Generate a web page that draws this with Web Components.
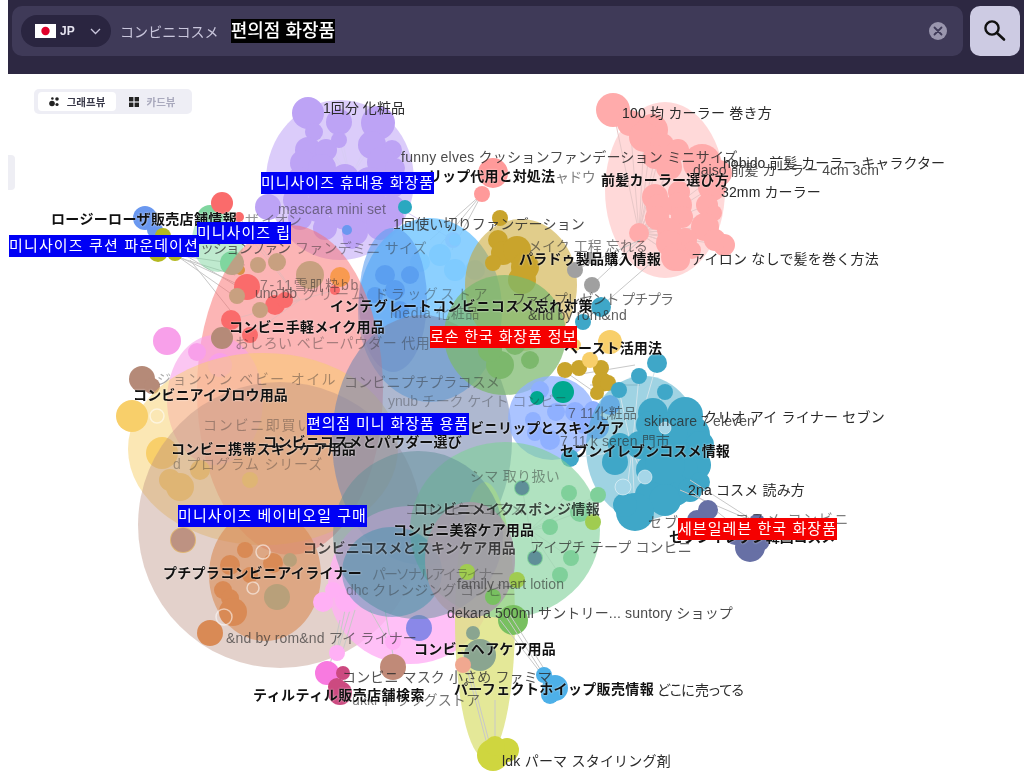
<!DOCTYPE html>
<html lang="ja">
<head>
<meta charset="utf-8">
<title>graph</title>
<style>
  html, body { margin: 0; height: 100%; background: #fff; overflow: hidden; }
  body { padding-left: 8px; box-sizing: border-box; display: flex; flex-direction: column;
    font-family: "Liberation Sans", "Noto Sans CJK JP", "Noto Sans CJK KR", sans-serif; filter: blur(.35px); }
</style>
</head>
<body>
<app-header></app-header>
<graph-canvas>
  <view-toggle></view-toggle>
  <graph-label x="323" y="107" w="82">1回分 化粧品</graph-label>
  <graph-label x="622" y="112" w="150">100 均 カーラー 巻き方</graph-label>
  <graph-label x="401" y="156" w="337" o=".85">funny elves クッションファンデーション ミニサイズ</graph-label>
  <graph-label x="723" y="162" w="222">hobido 前髪 カーラー キャラクター</graph-label>
  <graph-label x="693" y="169" w="186" o=".85">daiso 前髪 カーラー 4cm 3cm</graph-label>
  <graph-label x="721" y="191" w="100">32mm カーラー</graph-label>
  <graph-label x="555" y="176" w="40" o=".6">ャドウ</graph-label>
  <graph-label x="278" y="209" w="108" o=".55">mascara mini set</graph-label>
  <graph-label x="393" y="223" w="192" o=".85">1回使い切りファンデーション</graph-label>
  <graph-label x="528" y="245" w="120" o=".6">メイク 工程 忘れる</graph-label>
  <graph-label x="691" y="258" w="188">アイロン なしで髪を巻く方法</graph-label>
  <graph-label x="245" y="219" w="56" o=".5">ザ イオン</graph-label>
  <graph-label x="200" y="247" w="90" o=".7">ッションファン</graph-label>
  <graph-label x="295" y="247" w="132" o=".45">ファンデミニ サイズ</graph-label>
  <graph-label x="260" y="284" w="100" o=".5">7-11雪肌粋bb</graph-label>
  <graph-label x="255" y="293" w="42" o=".6">uno bb</graph-label>
  <graph-label x="302" y="293" w="188" o=".4">クリーム ドラッグストア</graph-label>
  <graph-label x="512" y="298" w="161" o=".7">ファイ プレゼント プチプラ</graph-label>
  <graph-label x="528" y="315" w="99" o=".75">&amp;nd by rom&amp;nd</graph-label>
  <graph-label x="390" y="312" w="90" o=".4">media 化粧品</graph-label>
  <graph-label x="235" y="342" w="195" o=".4">おしろい ベビーパウダー 代用</graph-label>
  <graph-label x="344" y="381" w="156" o=".45">コンビニプチプラコスメ</graph-label>
  <graph-label x="157" y="378" w="180" o=".4">ジョンソン ベビー オイル</graph-label>
  <graph-label x="388" y="400" w="180" o=".35">ynub チーク ケイト コンビニ</graph-label>
  <graph-label x="568" y="412" w="69" o=".6">7 11化粧品</graph-label>
  <graph-label x="644" y="421" w="111" o=".8">skincare 7 eleven</graph-label>
  <graph-label x="703" y="416" w="182">クリオ アイ ライナー セブン</graph-label>
  <graph-label x="203" y="424" w="110" o=".35">コンビニ即買い</graph-label>
  <graph-label x="560" y="440" w="110" o=".6">7 11 k seren 門市</graph-label>
  <graph-label x="173" y="463" w="150" o=".35">d プログラム シリーズ</graph-label>
  <graph-label x="470" y="475" w="90" o=".45">シマ 取り扱い</graph-label>
  <graph-label x="688" y="489" w="117">2na コスメ 読み方</graph-label>
  <graph-label x="405" y="508" w="120" o=".4">ココンビニコスメ</graph-label>
  <graph-label x="648" y="521" w="32" o=".7">セブ</graph-label>
  <graph-label x="735" y="518" w="115" o=".6">コスメ コンビニ</graph-label>
  <graph-label x="530" y="546" w="162" o=".75">アイプチ テープ コンビニ</graph-label>
  <graph-label x="372" y="573" w="130" o=".35">パーソナルアイライナー</graph-label>
  <graph-label x="346" y="589" w="170" o=".4">dhc クレンジング コンビニ</graph-label>
  <graph-label x="457" y="584" w="107" o=".6">family mart lotion</graph-label>
  <graph-label x="447" y="612" w="286" o=".85">dekara 500ml サントリー... suntory ショップ</graph-label>
  <graph-label x="226" y="637" w="191" o=".65">&amp;nd by rom&amp;nd アイ ライナー</graph-label>
  <graph-label x="342" y="676" w="210" o=".8">コンビニ マスク 小さめ ファミマ</graph-label>
  <graph-label x="352" y="699" w="128" o=".65">ukki ドラッグストア</graph-label>
  <graph-label x="657" y="689" w="86">どこに 売ってる</graph-label>
  <graph-label x="502" y="760" w="169">ldk パーマ スタイリング剤</graph-label>

  <graph-label kind="bold" x="51" y="218" w="186">ロージーローザ販売店舗情報</graph-label>
  <graph-label kind="bold" x="428" y="175" w="127">リップ代用と対処法</graph-label>
  <graph-label kind="bold" x="601" y="179" w="128">前髪カーラー選び方</graph-label>
  <graph-label kind="bold" x="519" y="258" w="142">パラドゥ製品購入情報</graph-label>
  <graph-label kind="bold" x="330" y="305" w="263">インテグレートコンビニコスメ忘れ対策</graph-label>
  <graph-label kind="bold" x="229" y="326" w="156">コンビニ手軽メイク用品</graph-label>
  <graph-label kind="bold" x="564" y="347" w="98">ペースト活用法</graph-label>
  <graph-label kind="bold" x="133" y="394" w="155">コンビニアイブロウ用品</graph-label>
  <graph-label kind="bold" x="171" y="448" w="185">コンビニ携帯スキンケア用品</graph-label>
  <graph-label kind="bold" x="263" y="441" w="199">コンビニコスメとパウダー選び</graph-label>
  <graph-label kind="bold" x="442" y="427" w="182">コンビニリップとスキンケア</graph-label>
  <graph-label kind="bold" x="560" y="450" w="170">セブンイレブンコスメ情報</graph-label>
  <graph-label kind="bold" x="414" y="508" w="186" o=".75">コンビニメイクスポンジ情報</graph-label>
  <graph-label kind="bold" x="393" y="529" w="141">コンビニ美容ケア用品</graph-label>
  <graph-label kind="bold" x="303" y="547" w="213" o=".7">コンビニコスメとスキンケア用品</graph-label>
  <graph-label kind="bold" x="163" y="572" w="199">プチプラコンビニアイライナー</graph-label>
  <graph-label kind="bold" x="669" y="536" w="166">セブンイレブン韓国コスメ</graph-label>
  <graph-label kind="bold" x="414" y="648" w="142">コンビニヘアケア用品</graph-label>
  <graph-label kind="bold" x="454" y="688" w="200">パーフェクトホイップ販売情報</graph-label>
  <graph-label kind="bold" x="253" y="694" w="172">ティルティル販売店舗検索</graph-label>

  <graph-label kind="blue" x="261" y="183" w="173">미니사이즈 휴대용 화장품</graph-label>
  <graph-label kind="blue" x="197" y="233" w="94">미니사이즈 립</graph-label>
  <graph-label kind="blue" x="9" y="246" w="190">미니사이즈 쿠션 파운데이션</graph-label>
  <graph-label kind="blue" x="307" y="424" w="162">편의점 미니 화장품 용품</graph-label>
  <graph-label kind="blue" x="178" y="516" w="189">미니사이즈 베이비오일 구매</graph-label>
  <graph-label kind="red" x="430" y="337" w="147">로손 한국 화장품 정보</graph-label>
  <graph-label kind="red" x="678" y="529" w="159">세븐일레븐 한국 화장품</graph-label>
</graph-canvas>

<script>
// header bar with language pill, query and search button
class AppHeader extends HTMLElement {
  constructor() {
    super()
    this.root = this.attachShadow({mode: 'open'})
    this.root.innerHTML = `
      <style>
        :host { display: flex; flex: none; height: 74px; background: #2d2842; padding: 6px 4px 18px 4px; box-sizing: border-box; gap: 7px; }
        .box { flex: 1; display: flex; align-items: center; background: #3f3a58; border-radius: 10px; padding: 0 16px 0 9px; }
        .query { color: #c9c6dc; font-size: 14px; margin-left: 9px; letter-spacing: .1px; }
        .mark { background: #000; color: #fff; font-size: 18px; font-family: "Liberation Sans", "Noto Sans CJK KR", sans-serif; font-weight: 500; margin-left: 12px; line-height: 24px; }
        .clear { margin-left: auto; display: flex; }
        button { all: unset; width: 50px; height: 50px; border-radius: 10px; background: #cdcbe3; display: flex; align-items: center; justify-content: center; }
      </style>
      <div class="box">
        <lang-select></lang-select>
        <span class="query">コンビニコスメ</span>
        <span class="mark">편의점 화장품</span>
        <span class="clear">
          <svg width="18" height="18" viewBox="0 0 18 18"><circle cx="9" cy="9" r="9" fill="#9a96ae"/><path d="M5.5 5.5l7 7M12.5 5.5l-7 7" stroke="#3f3a58" stroke-width="1.8" stroke-linecap="round"/></svg>
        </span>
      </div>
      <button>
        <svg width="26" height="26" viewBox="0 0 26 26"><circle cx="10" cy="10" r="6.6" fill="none" stroke="#111" stroke-width="2.4"/><path d="M15 15l7 6.5" stroke="#111" stroke-width="2.6" stroke-linecap="round"/></svg>
      </button>`
  }
}
customElements.define('app-header', AppHeader)

class LangSelect extends HTMLElement {
  constructor() {
    super()
    this.root = this.attachShadow({mode: 'open'})
    this.root.innerHTML = `
      <style>
        :host { display: flex; align-items: center; width: 90px; height: 32px; box-sizing: border-box; padding-left: 14px; background: #2a2540; border-radius: 16px; color: #e6e4f0; font-size: 12px; font-weight: 700; }
        span { margin-left: 4px; }
        .chev { margin-left: 15px; }
      </style>
      <svg width="21" height="14" viewBox="0 0 21 14"><rect width="21" height="14" fill="#fff"/><circle cx="10.5" cy="7" r="4.2" fill="#e0002a"/></svg>
      <span>JP</span>
      <svg class="chev" width="11" height="7" viewBox="0 0 11 7"><path d="M1 1l4.5 4.5L10 1" fill="none" stroke="#c9c6dc" stroke-width="1.3"/></svg>`
  }
}
customElements.define('lang-select', LangSelect)

class ViewToggle extends HTMLElement {
  constructor() {
    super()
    this.root = this.attachShadow({mode: 'open'})
    this.root.innerHTML = `
      <style>
        :host { position: absolute; left: 26px; top: 15px; display: flex; width: 158px; height: 25px; box-sizing: border-box; padding: 3px 4px; background: #eeeef5; border-radius: 5px; font-size: 10.5px; font-weight: 700; z-index: 3; }
        div { display: flex; align-items: center; justify-content: center; gap: 8px; }
        .on { width: 78px; background: #fff; border-radius: 4px; color: #3a3a4a; }
        .off { width: 72px; color: #a9a9bd; }
      </style>
      <div class="on">
        <svg width="10" height="10" viewBox="0 0 10 10" fill="#222"><circle cx="3" cy="6.5" r="2.8"/><circle cx="8" cy="2" r="1.8"/><circle cx="8" cy="7.5" r="1.6"/><circle cx="3.4" cy="1.5" r="1.3"/></svg>
        <span>그래프뷰</span>
      </div>
      <div class="off">
        <svg width="10" height="10" viewBox="0 0 10 10" fill="#222"><rect width="4.4" height="4.4"/><rect x="5.6" width="4.4" height="4.4"/><rect y="5.6" width="4.4" height="4.4"/><rect x="5.6" y="5.6" width="4.4" height="4.4"/></svg>
        <span>카드뷰</span>
      </div>`
  }
}
customElements.define('view-toggle', ViewToggle)

// one text on the graph, x/y are page coordinates of its left edge and middle, w its width
class GraphLabel extends HTMLElement {
  constructor() {
    super()
    this.root = this.attachShadow({mode: 'open'})
    this.root.innerHTML = `
      <style>
        :host { position: absolute; white-space: nowrap; transform: translateY(-50%); font-size: 14px; color: #2a2a2a; z-index: 1; }
        :host([kind=bold]) { font-weight: 700; font-size: 14px; color: #111; text-shadow: 0 0 2px rgba(255,255,255,.8); z-index: 2; }
        :host([kind=blue]), :host([kind=red]) { color: #fff; font-size: 15px; line-height: 22px; font-family: "Liberation Sans", "Noto Sans CJK KR", sans-serif; z-index: 2; }
        :host([kind=blue]) { background: #0000f5; }
        :host([kind=red]) { background: #f50000; }
      </style>
      <slot></slot>`
  }

  connectedCallback() {
    this.style.left = (this.getAttribute('x') - 8) + 'px'
    this.style.top = (this.getAttribute('y') - 74) + 'px'
    if (this.hasAttribute('o')) this.style.opacity = this.getAttribute('o')
  }

  // stretch or squeeze the letters to the width the label has in the picture
  fitWidth() {
    let w = +this.getAttribute('w')
    let n = this.textContent.length
    this.style.letterSpacing = ((w - this.getBoundingClientRect().width) / n) + 'px'
  }
}
customElements.define('graph-label', GraphLabel)

const CLUSTERS = [
  {color: '#bda3f5', hulls: [[340,180,74,80,.55]], hub: [350,178], edge: '#d8ccf5', nodes: [[308,113,16],[339,122,13],[378,123,17],[314,132,9],[339,140,8],[372,145,14],[392,150,10],[308,150,13],[326,150,11],[303,163,13],[322,168,14],[345,178,14],[382,162,15],[395,168,10],[300,180,13],[322,188,16],[345,198,18],[370,185,18],[392,185,13],[296,200,13],[318,208,14],[345,215,15],[372,208,18],[392,208,13],[268,207,13],[300,218,12],[325,228,12],[355,232,13],[380,226,14],[395,218,9],[453,240,8],[352,240,9]]},
  {color: '#ffabab', hulls: [[665,190,60,88,.45]], hub: [639,233], edge: '#e8c8c8', nodes: [[613,110,17],[630,123,13],[652,130,16],[644,137,15],[662,145,12],[678,150,11],[655,157,12],[702,163,19],[669,167,13],[719,173,13],[712,187,14],[655,197,13],[679,192,11],[679,205,13],[659,207,13],[707,205,11],[714,213,8],[682,217,11],[657,218,12],[705,227,14],[669,230,12],[639,233,10],[724,245,11],[715,240,11],[685,240,12],[669,243,13],[692,250,9],[675,257,14],[679,260,11]]},
  {color: '#ff9a9a', hulls: [], nodes: [[493,173,15],[482,194,8]], lines: [[482,194,430,240],[482,194,440,245],[482,194,452,250]]},
  {color: '#2aa8c0', hulls: [], nodes: [[405,207,7]]},
  {color: '#6a98f0', hulls: [], nodes: [[145,218,12],[155,230,8],[347,230,5]]},
  {color: '#b4b820', hulls: [], nodes: [[158,252,10],[175,253,8],[163,236,8],[240,270,5]], lines: [[180,258,235,275],[180,258,240,300],[175,255,250,290],[180,252,235,285],[190,260,230,310],[175,255,245,265]]},
  {color: '#7fd69f', hulls: [[218,240,26,32,.5]], nodes: [[210,218,13],[232,263,12]]},
  {color: '#7fcbff', hulls: [[430,310,72,92,.9]], nodes: [[440,255,11],[420,262,10],[455,270,11],[475,270,10],[455,240,6]]},
  {color: '#5b9ff0', hulls: [[393,300,34,72,.6]], nodes: [[385,275,10],[395,290,10],[410,275,9],[375,295,8],[400,310,9]]},
  {color: '#c9a42c', hulls: [[521,285,56,66,.55]], nodes: [[500,218,8],[498,240,10],[503,253,12],[493,263,8],[517,250,14],[525,267,14],[522,280,14],[565,370,8],[579,368,8],[601,368,8],[602,382,10],[608,383,8],[597,393,7]], lines: [[575,375,635,365],[590,385,640,385],[570,375,620,410]]},
  {color: '#a0a0a0', hulls: [], nodes: [[575,270,8],[592,285,8],[590,258,6]], lines: [[592,285,640,240],[575,270,640,240],[583,322,660,255]]},
  {color: '#3fa7c8', hulls: [], nodes: [[601,307,10],[583,322,8]]},
  {color: '#f8cf6a', hulls: [], nodes: [[610,342,12],[590,360,8],[575,345,6]]},
  {color: '#fa6b6b', hulls: [[290,390,93,165,.5]], hub: [300,300], edge: '#e8b8b8', nodes: [[222,203,11],[247,287,13],[275,305,10],[231,320,10],[250,335,8],[335,290,5],[239,217,5],[285,300,8]]},
  {color: '#c8a080', hulls: [], nodes: [[258,265,8],[277,262,9],[310,275,14],[260,310,8],[237,296,8]]},
  {color: '#f89a50', hulls: [], nodes: [[340,277,10]]},
  {color: '#f8a0ea', hulls: [[215,400,48,65,.6]], nodes: [[167,341,14],[197,352,9],[220,365,12]]},
  {color: '#b58a78', hulls: [], nodes: [[142,379,13],[222,338,11],[152,386,8]]},
  {color: '#f8cf6a', hulls: [[263,449,135,96,.5]], nodes: [[132,416,16],[162,453,16],[170,480,11],[180,487,14],[200,470,10],[250,480,8],[183,540,13]], rings: [[157,416,7]]},
  {color: '#bd9282', hulls: [[280,525,142,143,.42]], nodes: [[183,540,12]]},
  {color: '#d98a55', hulls: [[265,575,56,66,.6]], nodes: [[210,633,13],[223,590,9],[230,598,9],[233,612,14],[230,565,10],[245,550,8],[273,563,10],[250,575,8]], rings: [[224,617,8],[253,588,6],[263,552,7]]},
  {color: '#b8a07a', hulls: [], nodes: [[277,597,13],[290,560,7]]},
  {color: '#7889b0', hulls: [[422,440,90,125,.6]], nodes: []},
  {color: '#7cb86c', hulls: [[505,335,61,60,.72]], nodes: [[515,345,10],[500,365,14],[530,360,9],[490,350,12]]},
  {color: '#8fb0ff', hulls: [[552,418,44,42,.75]], nodes: [[540,390,9],[556,412,9],[533,420,8],[575,412,10],[593,410,9],[610,405,10],[550,440,10],[535,433,8],[585,423,11],[597,427,12]]},
  {color: '#00a88f', hulls: [], nodes: [[563,392,11],[537,398,7]]},
  {color: '#3fa7c8', hulls: [[644,448,58,72,.5]], hub: [632,450], edge: '#d0e4ec', nodes: [[657,363,10],[639,376,8],[619,390,8],[665,392,8],[653,413,15],[685,415,18],[690,435,20],[700,445,14],[650,425,14],[620,445,12],[660,445,18],[695,465,16],[680,470,18],[615,462,13],[650,470,14],[675,490,16],[700,482,10],[650,495,15],[665,500,16],[690,490,12],[635,512,19],[625,505,12],[570,458,9],[640,445,14],[670,430,18],[665,465,20]], light: [[623,487,8],[645,477,7],[665,428,6]]},
  {color: '#6770a5', hulls: [], nodes: [[708,510,10],[697,520,10],[690,530,8],[757,522,8],[750,547,15],[758,540,12],[735,535,10]], lines: [[690,490,740,530],[680,490,750,520],[690,480,760,525]]},
  {color: '#ffb0f5', hulls: [[410,585,82,79,.8]], nodes: [[323,602,10],[347,600,12],[337,653,8],[393,642,8],[333,590,8]], lines: [[345,610,337,650],[350,610,335,660],[355,610,340,660],[340,620,330,665],[370,610,393,650],[385,610,393,655]]},
  {color: '#8a88e8', hulls: [], nodes: [[419,628,13]]},
  {color: '#c08a78', hulls: [], nodes: [[393,667,13]]},
  {color: '#f87ae0', hulls: [], nodes: [[327,673,12]]},
  {color: '#cc4a80', hulls: [], nodes: [[343,673,7],[340,693,12],[337,687,9]]},
  {color: '#dde27e', hulls: [[485,620,30,138,.8]], nodes: [], lines: [[490,745,470,670],[495,745,495,700],[488,748,462,650]]},
  {color: '#7fd09a', hulls: [[505,530,95,88,.62]], hub: [530,530], edge: '#a8d8b8', nodes: [[535,558,8],[571,558,8],[550,527,8],[522,488,8],[569,493,8],[580,512,10],[598,495,8],[560,575,8]]},
  {color: '#5f8f98', hulls: [[418,535,85,84,.5]], nodes: [[535,558,7],[522,488,7]]},
  {color: '#2f8ea8', hulls: [[392,572,50,45,.42]], nodes: []},
  {color: '#a89aa8', hulls: [[470,560,45,58,.8]], nodes: []},
  {color: '#78c060', hulls: [], nodes: [[513,620,15],[493,597,8]]},
  {color: '#a0cc50', hulls: [], nodes: [[517,580,8],[593,522,8],[467,572,8]]},
  {color: '#8aa590', hulls: [], nodes: [[480,655,16],[473,633,7]]},
  {color: '#f0a890', hulls: [], nodes: [[463,665,8]]},
  {color: '#4db0e8', hulls: [], nodes: [[544,675,8],[555,688,13],[550,695,9]], lines: [[544,675,505,615],[548,675,510,615],[540,672,500,620]]},
  {color: '#cfd63f', hulls: [], nodes: [[493,755,16],[507,750,12],[495,746,10]]}
]

class GraphCanvas extends HTMLElement {
  constructor() {
    super()
    this.root = this.attachShadow({mode: 'open'})
    this.root.innerHTML = `
      <style>
        :host { display: block; position: relative; flex: 1; overflow: hidden; background: #fff; }
        svg { position: absolute; left: 0; top: 0; width: 1016px; height: 705px; }
        .handle { position: absolute; left: 0; top: 81px; width: 7px; height: 35px; background: #eeeef4; border-radius: 0 4px 4px 0; }
      </style>
      <svg viewBox="8 74 1016 705">${CLUSTERS.map(c => this.cluster(c)).join('')}</svg>
      <div class="handle"></div>
      <slot></slot>`
  }

  cluster(c) {
    let out = c.hulls.map(h => `<ellipse cx="${h[0]}" cy="${h[1]}" rx="${h[2]}" ry="${h[3]}" fill="${c.color}" opacity="${h[4]}"/>`).join('')
    if (c.hub) {
      out += c.nodes.map(n => `<line x1="${c.hub[0]}" y1="${c.hub[1]}" x2="${n[0]}" y2="${n[1]}" stroke="${c.edge}"/>`).join('')
    }
    out += (c.lines || []).map(l => `<line x1="${l[0]}" y1="${l[1]}" x2="${l[2]}" y2="${l[3]}" stroke="#c8c8c8"/>`).join('')
    out += c.nodes.map(n => `<circle cx="${n[0]}" cy="${n[1]}" r="${n[2]}" fill="${c.color}"/>`).join('')
    out += (c.rings || []).map(n => `<circle cx="${n[0]}" cy="${n[1]}" r="${n[2]}" fill="none" stroke="#fff" stroke-opacity=".55" stroke-width="1.5"/>`).join('')
    out += (c.light || []).map(n => `<circle cx="${n[0]}" cy="${n[1]}" r="${n[2]}" fill="#a5d6e8" stroke="#fff" stroke-opacity=".5"/>`).join('')
    return out
  }
}
customElements.define('graph-canvas', GraphCanvas)

document.querySelectorAll('graph-label').forEach(l => l.fitWidth())
</script>
</body>
</html>
